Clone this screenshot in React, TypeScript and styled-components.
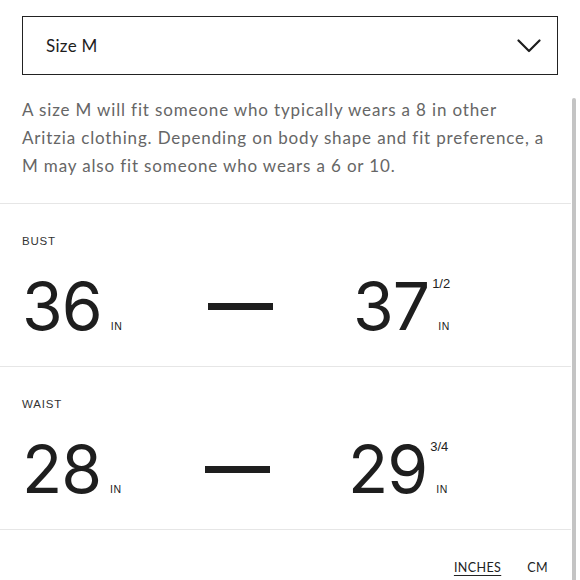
import React from "react";
import styled, { createGlobalStyle } from "styled-components";

const Global = createGlobalStyle`
  html, body { margin: 0; padding: 0; background: #fff; }
  body { font-family: "Lato", "Liberation Sans", sans-serif; color: #222; }
  * { box-sizing: border-box; }
`;

const Page = styled.div`
  width: 580px;
  height: 580px;
  overflow: hidden;
  display: flex;
  flex-direction: column;
  padding-top: 16px;
`;

const Select = styled.div`
  margin: 0 22px 0 22px;
  height: 59px;
  border: 1.5px solid #222;
  display: flex;
  align-items: center;
  justify-content: space-between;
  padding: 0 16px 0 23px;
  font-size: 17px;
  letter-spacing: 0.3px;
  color: #1e1e1e;
`;

const ScrollArea = styled.div`
  flex: 1;
  display: flex;
  margin-top: 16px;
`;

const Content = styled.div`
  width: 571px;
  display: flex;
  flex-direction: column;
`;

const Track = styled.div`
  width: 9px;
  display: flex;
  flex-direction: column;
  padding: 7px 4px 0 0;
`;

const Thumb = styled.div`
  flex: 1;
  width: 4px;
  margin-left: 1px;
  background: #c4c4c4;
  border-radius: 2px 2px 0 0;
`;

const Description = styled.p`
  margin: 0;
  padding: 5px 0 23px 22px;
  font-size: 17px;
  line-height: 28px;
  color: #666;
  letter-spacing: 0.85px;
  white-space: nowrap;
`;

const Section = styled.div`
  border-top: 1px solid #e6e6e6;
  padding: 30px 0 26px 22px;
`;

const Label = styled.div`
  font-family: "Liberation Sans", sans-serif;
  font-size: 11.5px;
  line-height: 14px;
  letter-spacing: 0.8px;
  color: #333;
`;

const Row = styled.div`
  margin-top: 25px;
  display: flex;
  align-items: center;
`;

const Group = styled.div<{ $w: number }>`
  display: flex;
  width: ${(p) => p.$w}px;
  height: 67px;
`;

const Num = styled.div`
  font-family: "Inter", "Liberation Sans", sans-serif;
  font-size: 66px;
  line-height: 67px;
  letter-spacing: -1px;
  color: #1e1e1e;
`;

const Side = styled.div<{ $pad: number }>`
  display: flex;
  flex-direction: column;
  justify-content: space-between;
  padding: 5px 0 9px ${(p) => p.$pad}px;
`;

const Frac = styled.div`
  font-family: "Liberation Sans", sans-serif;
  font-size: 13px;
  line-height: 12px;
  color: #222;
`;

const Unit = styled.div<{ $shift?: number }>`
  font-family: "Liberation Sans", sans-serif;
  font-size: 10.5px;
  line-height: 10px;
  letter-spacing: 0.6px;
  color: #222;
  padding-left: ${(p) => p.$shift ?? 0}px;
`;

const Dash = styled.div<{ $gapAfter: number }>`
  width: 65px;
  height: 7px;
  background: #1e1e1e;
  margin-right: ${(p) => p.$gapAfter}px;
`;

const Footer = styled.div`
  border-top: 1px solid #e6e6e6;
  display: flex;
  justify-content: flex-end;
  gap: 26px;
  padding: 30px 23px 0 0;
  font-size: 12.5px;
  letter-spacing: 0.4px;
  color: #222;
`;

const Toggle = styled.span<{ $active?: boolean }>`
  text-decoration: ${(p) => (p.$active ? "underline" : "none")};
  text-underline-offset: 3px;
  text-decoration-thickness: 1px;
`;

const Chevron = () => (
  <svg width="24" height="14" viewBox="0 0 24 14" fill="none">
    <path d="M1.5 1.5 L12 12 L22.5 1.5" stroke="#1e1e1e" strokeWidth="2.2" strokeLinecap="round" strokeLinejoin="round" />
  </svg>
);

type M = { label: string; lo: string; hi: string; frac: string; leftW: number; gap: number };

const data: M[] = [
  { label: "BUST", lo: "36", hi: "37", frac: "1/2", leftW: 186, gap: 80 },
  { label: "WAIST", lo: "28", hi: "29", frac: "3/4", leftW: 183, gap: 78 },
];

export default function App() {
  return (
    <>
      <Global />
      <Page>
        <Select>
          <span>Size M</span>
          <Chevron />
        </Select>
        <ScrollArea>
          <Content>
            <Description>
              A size M will fit someone who typically wears a 8 in other
              <br />
              Aritzia clothing. Depending on body shape and fit preference, a
              <br />
              M may also fit someone who wears a 6 or 10.
            </Description>
            {data.map((m) => (
              <Section key={m.label}>
                <Label>{m.label}</Label>
                <Row>
                  <Group $w={m.leftW}>
                    <Num>{m.lo}</Num>
                    <Side $pad={9}>
                      <span />
                      <Unit>IN</Unit>
                    </Side>
                  </Group>
                  <Dash $gapAfter={m.gap} />
                  <Group $w={120}>
                    <Num>{m.hi}</Num>
                    <Side $pad={3}>
                      <Frac>{m.frac}</Frac>
                      <Unit $shift={6}>IN</Unit>
                    </Side>
                  </Group>
                </Row>
              </Section>
            ))}
            <Footer>
              <Toggle $active>INCHES</Toggle>
              <Toggle>CM</Toggle>
            </Footer>
          </Content>
          <Track>
            <Thumb />
          </Track>
        </ScrollArea>
      </Page>
    </>
  );
}
